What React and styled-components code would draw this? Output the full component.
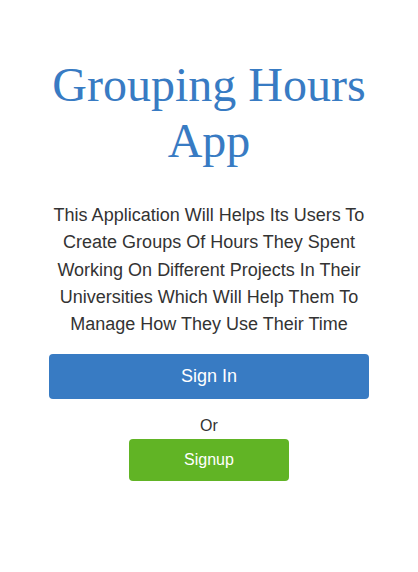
import React from 'react';
import styled, { createGlobalStyle } from 'styled-components';

const GlobalStyle = createGlobalStyle`
  html, body {
    margin: 0;
    padding: 0;
    background: #fff;
  }
  body {
    font-family: "Liberation Sans", Arial, sans-serif;
    color: #333;
  }
`;

const StyledWrapper = styled.main`
  width: 320px;
  margin: 0 auto;
  padding-top: 57px;
  display: flex;
  flex-direction: column;
  align-items: center;
  text-align: center;
`;

const Title = styled.h1`
  margin: 0;
  font-family: "Liberation Serif", "Times New Roman", serif;
  font-weight: 400;
  font-size: 48px;
  line-height: 56px;
  color: #387bc3;
`;

const Description = styled.p`
  margin: 33px 0 0;
  font-size: 18px;
  line-height: 27.3px;
  color: #333;
`;

const Button = styled.button`
  border: none;
  border-radius: 4px;
  color: #fff;
  font-family: "Liberation Sans", Arial, sans-serif;
  cursor: pointer;
  width: ${({ wide }) => (wide ? '320px' : '160px')};
  height: ${({ wide }) => (wide ? '45px' : '42px')};
  font-size: ${({ wide }) => (wide ? '18px' : '16px')};
  background-color: ${({ variant }) => (variant === 'success' ? '#61b425' : '#387bc3')};
`;

const SignInButton = styled(Button)`
  margin-top: 16px;
`;

const Separator = styled.span`
  margin: 18px 0 4px;
  font-size: 16px;
  line-height: 18px;
`;

const App = () => (
  <>
    <GlobalStyle />
    <StyledWrapper>
      <Title>Grouping Hours App</Title>
      <Description>
        This Application Will Helps Its Users To Create Groups Of Hours They Spent Working On
        Different Projects In Their Universities Which Will Help Them To Manage How They Use
        Their Time
      </Description>
      <SignInButton wide>Sign In</SignInButton>
      <Separator>Or</Separator>
      <Button variant="success">Signup</Button>
    </StyledWrapper>
  </>
);

export default App;
